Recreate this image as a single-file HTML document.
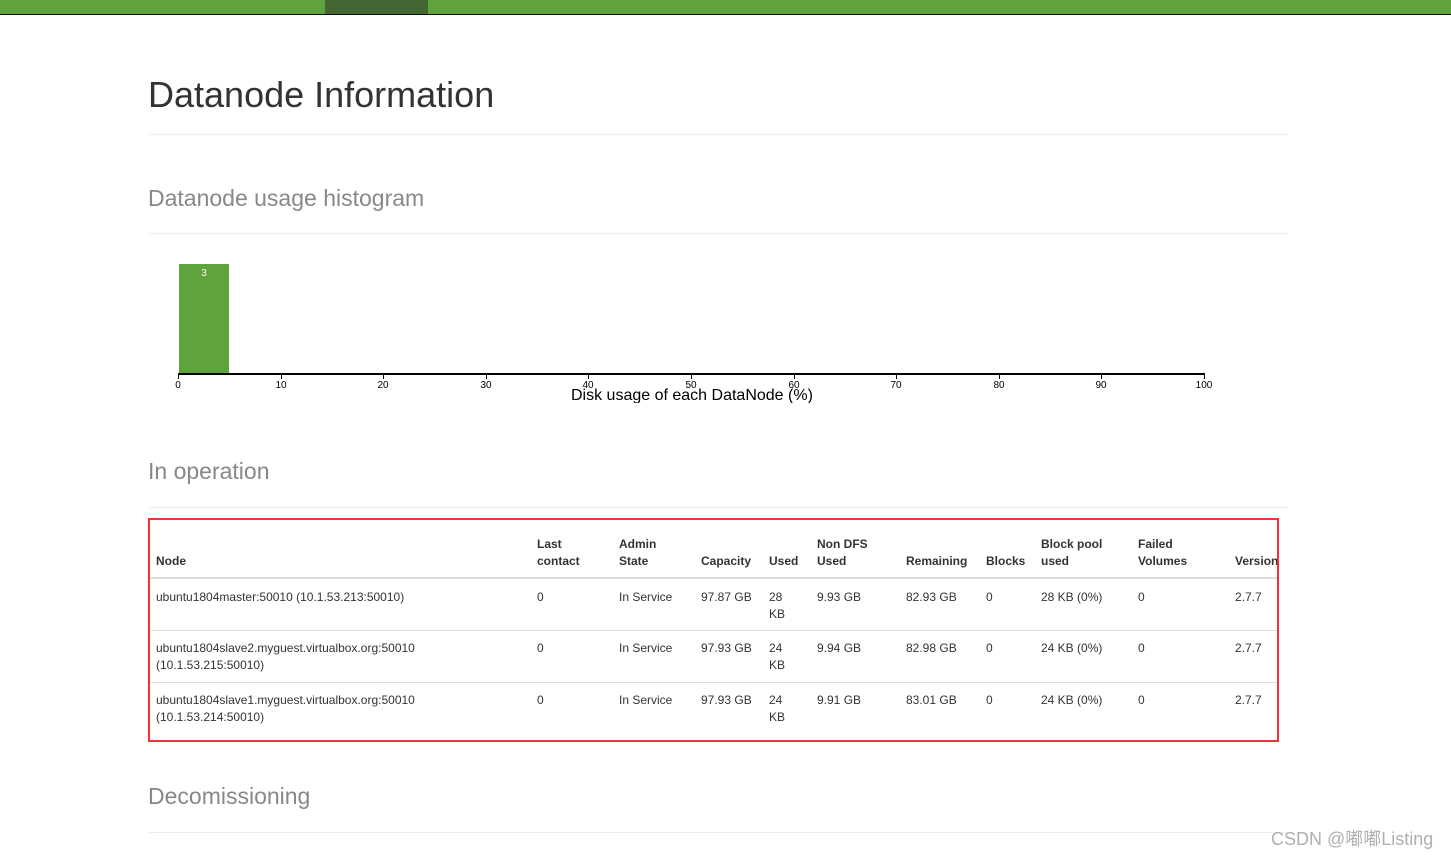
<!DOCTYPE html>
<html><head><meta charset="utf-8"><style>
body{margin:0;width:1451px;height:857px;overflow:hidden;background:#fff;font-family:"Liberation Sans",sans-serif;color:#333;position:relative}
.a{position:absolute;white-space:nowrap}
.h{color:#888;font-size:23px}
.hr{position:absolute;left:148px;width:1140px;height:1px;background:#eee}
.t{font-size:12px;color:#333}
.b{font-weight:bold;font-size:12px;color:#333;line-height:17px}
.tick{position:absolute;top:374px;width:1px;height:5px;background:#000}
.tl{position:absolute;top:380px;font-size:10px;color:#000;transform:translateX(-50%)}
</style></head><body>
<div class="a" style="left:0;top:0;width:1451px;height:14px;background:#5ea33c"></div>
<div class="a" style="left:325px;top:0;width:103px;height:14px;background:#446633"></div>
<div class="a" style="left:0;top:14px;width:1451px;height:1px;background:#111"></div>

<div class="a" style="left:148px;top:74px;font-size:36px;color:#333">Datanode Information</div>
<div class="hr" style="top:134px"></div>
<div class="a h" style="left:148px;top:185px">Datanode usage histogram</div>
<div class="hr" style="top:233px"></div>

<div class="a" style="left:179px;top:264px;width:50px;height:110px;background:#5ea33c"></div>
<div class="a" style="left:179px;top:268px;width:50px;text-align:center;color:#fff;font-size:10px">3</div>
<div class="a" style="left:178px;top:373px;width:1027px;height:1.5px;background:#000"></div>
<div class="tick" style="left:178px"></div><div class="tl" style="left:178px">0</div>
<div class="tick" style="left:281px"></div><div class="tl" style="left:281px">10</div>
<div class="tick" style="left:383px"></div><div class="tl" style="left:383px">20</div>
<div class="tick" style="left:486px"></div><div class="tl" style="left:486px">30</div>
<div class="tick" style="left:588px"></div><div class="tl" style="left:588px">40</div>
<div class="tick" style="left:691px"></div><div class="tl" style="left:691px">50</div>
<div class="tick" style="left:794px"></div><div class="tl" style="left:794px">60</div>
<div class="tick" style="left:896px"></div><div class="tl" style="left:896px">70</div>
<div class="tick" style="left:999px"></div><div class="tl" style="left:999px">80</div>
<div class="tick" style="left:1101px"></div><div class="tl" style="left:1101px">90</div>
<div class="tick" style="left:1204px"></div><div class="tl" style="left:1204px">100</div>
<div class="a" style="left:571px;top:387px;font-size:16px;color:#000;height:16px;overflow:hidden">Disk usage of each DataNode (%)</div>

<div class="a h" style="left:148px;top:458px">In operation</div>
<div class="hr" style="top:507px"></div>

<div class="a" style="left:148px;top:518px;width:1127px;height:220px;border:2px solid #f0323c"></div>
<div class="a" style="left:150px;top:577px;width:1127px;height:2px;background:#ddd"></div>
<div class="a" style="left:150px;top:630px;width:1127px;height:1px;background:#ddd"></div>
<div class="a" style="left:150px;top:682px;width:1127px;height:1px;background:#ddd"></div>

<div class="a b" style="left:156px;top:553px">Node</div>
<div class="a b" style="left:537px;top:536px">Last<br>contact</div>
<div class="a b" style="left:619px;top:536px">Admin<br>State</div>
<div class="a b" style="left:701px;top:553px">Capacity</div>
<div class="a b" style="left:769px;top:553px">Used</div>
<div class="a b" style="left:817px;top:536px">Non DFS<br>Used</div>
<div class="a b" style="left:906px;top:553px">Remaining</div>
<div class="a b" style="left:986px;top:553px">Blocks</div>
<div class="a b" style="left:1041px;top:536px">Block pool<br>used</div>
<div class="a b" style="left:1138px;top:536px">Failed<br>Volumes</div>
<div class="a b" style="left:1235px;top:553px;width:42px;overflow:hidden">Version</div>

<div class="a t" style="left:156px;top:589px;line-height:17px">ubuntu1804master:50010 (10.1.53.213:50010)</div>
<div class="a t" style="left:156px;top:640px;line-height:17px">ubuntu1804slave2.myguest.virtualbox.org:50010<br>(10.1.53.215:50010)</div>
<div class="a t" style="left:156px;top:692px;line-height:17px">ubuntu1804slave1.myguest.virtualbox.org:50010<br>(10.1.53.214:50010)</div>

<div class="a t" style="left:537px;top:589px;line-height:17px">0</div>
<div class="a t" style="left:537px;top:640px;line-height:17px">0</div>
<div class="a t" style="left:537px;top:692px;line-height:17px">0</div>
<div class="a t" style="left:619px;top:589px;line-height:17px">In Service</div>
<div class="a t" style="left:619px;top:640px;line-height:17px">In Service</div>
<div class="a t" style="left:619px;top:692px;line-height:17px">In Service</div>
<div class="a t" style="left:701px;top:589px;line-height:17px">97.87 GB</div>
<div class="a t" style="left:701px;top:640px;line-height:17px">97.93 GB</div>
<div class="a t" style="left:701px;top:692px;line-height:17px">97.93 GB</div>
<div class="a t" style="left:769px;top:589px;line-height:17px">28<br>KB</div>
<div class="a t" style="left:769px;top:640px;line-height:17px">24<br>KB</div>
<div class="a t" style="left:769px;top:692px;line-height:17px">24<br>KB</div>
<div class="a t" style="left:817px;top:589px;line-height:17px">9.93 GB</div>
<div class="a t" style="left:817px;top:640px;line-height:17px">9.94 GB</div>
<div class="a t" style="left:817px;top:692px;line-height:17px">9.91 GB</div>
<div class="a t" style="left:906px;top:589px;line-height:17px">82.93 GB</div>
<div class="a t" style="left:906px;top:640px;line-height:17px">82.98 GB</div>
<div class="a t" style="left:906px;top:692px;line-height:17px">83.01 GB</div>
<div class="a t" style="left:986px;top:589px;line-height:17px">0</div>
<div class="a t" style="left:986px;top:640px;line-height:17px">0</div>
<div class="a t" style="left:986px;top:692px;line-height:17px">0</div>
<div class="a t" style="left:1041px;top:589px;line-height:17px">28 KB (0%)</div>
<div class="a t" style="left:1041px;top:640px;line-height:17px">24 KB (0%)</div>
<div class="a t" style="left:1041px;top:692px;line-height:17px">24 KB (0%)</div>
<div class="a t" style="left:1138px;top:589px;line-height:17px">0</div>
<div class="a t" style="left:1138px;top:640px;line-height:17px">0</div>
<div class="a t" style="left:1138px;top:692px;line-height:17px">0</div>
<div class="a t" style="left:1235px;top:589px;line-height:17px">2.7.7</div>
<div class="a t" style="left:1235px;top:640px;line-height:17px">2.7.7</div>
<div class="a t" style="left:1235px;top:692px;line-height:17px">2.7.7</div>

<div class="a h" style="left:148px;top:783px">Decomissioning</div>
<div class="hr" style="top:832px"></div>
<div class="a" style="left:1271px;top:825px;font-size:18px;color:#b0b0b0;font-family:'Liberation Sans','Noto Sans CJK SC',sans-serif">CSDN @嘟嘟Listing</div>
</body></html>
